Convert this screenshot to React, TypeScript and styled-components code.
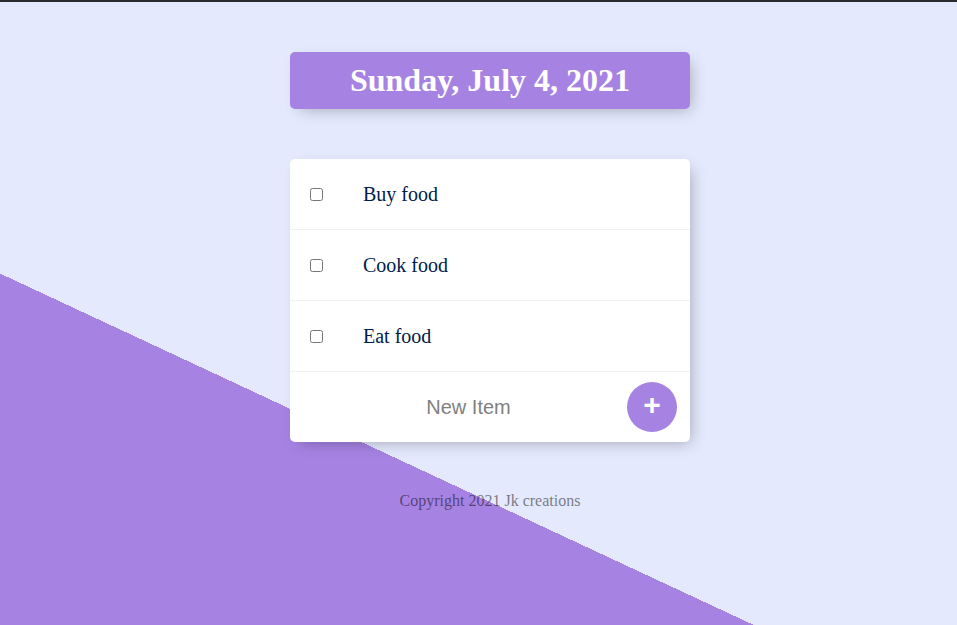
import React, { useState } from "react";
import styled, { createGlobalStyle } from "styled-components";

const GlobalStyle = createGlobalStyle`
  html, body {
    margin: 0;
    padding: 0;
    overflow: hidden;
  }
`;

const Page = styled.div`
  width: 964px;
  min-height: 950px;
  padding: 50px 8px 0;
  border-top: 2px solid #292a2d;
  background-color: #e4e9fd;
  background-image: linear-gradient(25deg, #a683e3 50%, #e4e9fd 50%);
  font-family: "Liberation Serif", "Times New Roman", serif;
  display: flex;
  flex-direction: column;
  gap: 50px;
`;

const Box = styled.div<{ $heading?: boolean }>`
  width: 400px;
  margin: 0 auto;
  background: ${(p) => (p.$heading ? "#a683e3" : "#fff")};
  border-radius: 5px;
  box-shadow: 5px 5px 15px -5px rgba(0, 0, 0, 0.3);
  text-align: ${(p) => (p.$heading ? "center" : "left")};
`;

const Title = styled.h1`
  margin: 0;
  padding: 10px;
  font-size: 32px;
  line-height: 37px;
  font-weight: bold;
  color: #fff;
`;

const Item = styled.div`
  min-height: 70px;
  display: flex;
  align-items: center;
  border-bottom: 1px solid #f1f1f1;

  &:last-child {
    border-bottom: 0;
  }
`;

const Check = styled.input`
  margin: 20px;
  width: 13px;
  height: 13px;

  &:checked + p {
    text-decoration: line-through;
    text-decoration-color: #a683e3;
  }
`;

const Label = styled.p`
  margin: 0;
  padding: 20px;
  font-size: 20px;
  font-weight: 400;
  color: #00204a;
`;

const NewForm = styled.form`
  min-height: 70px;
  display: flex;
  align-items: center;
  padding-left: 20px;
`;

const NewInput = styled.input`
  width: 317px;
  height: 60px;
  box-sizing: border-box;
  padding: 0;
  border: none;
  text-align: center;
  font-family: "Liberation Sans", Arial, sans-serif;
  font-size: 20px;
  color: #333;

  &::placeholder {
    color: grey;
    opacity: 1;
  }

  &:focus {
    outline: none;
    box-shadow: inset 0 -3px 0 0 #a683e3;
  }
`;

const AddButton = styled.button`
  width: 50px;
  height: 50px;
  border-radius: 50%;
  border: 0;
  padding: 0 0 4px;
  background-color: #a683e3;
  color: #fff;
  font-family: "Liberation Sans", Arial, sans-serif;
  font-size: 30px;
  font-weight: bold;
  line-height: 30px;
  cursor: pointer;
`;

const Footer = styled.footer`
  text-align: center;
  font-size: 16px;
  color: rgba(0, 0, 0, 0.5);
`;

export default function App() {
  const [items, setItems] = useState(["Buy food", "Cook food", "Eat food"]);
  const [text, setText] = useState("");

  const add = (e: React.FormEvent) => {
    e.preventDefault();
    if (text.trim()) {
      setItems([...items, text.trim()]);
      setText("");
    }
  };

  return (
    <>
      <GlobalStyle />
      <Page>
        <Box $heading>
          <Title>Sunday, July 4, 2021</Title>
        </Box>

        <Box>
          {items.map((item, i) => (
            <Item key={i}>
              <Check type="checkbox" />
              <Label>{item}</Label>
            </Item>
          ))}
          <NewForm onSubmit={add}>
            <NewInput
              type="text"
              placeholder="New Item"
              autoComplete="off"
              value={text}
              onChange={(e) => setText(e.target.value)}
            />
            <AddButton type="submit">+</AddButton>
          </NewForm>
        </Box>

        <Footer>Copyright 2021 Jk creations</Footer>
      </Page>
    </>
  );
}
